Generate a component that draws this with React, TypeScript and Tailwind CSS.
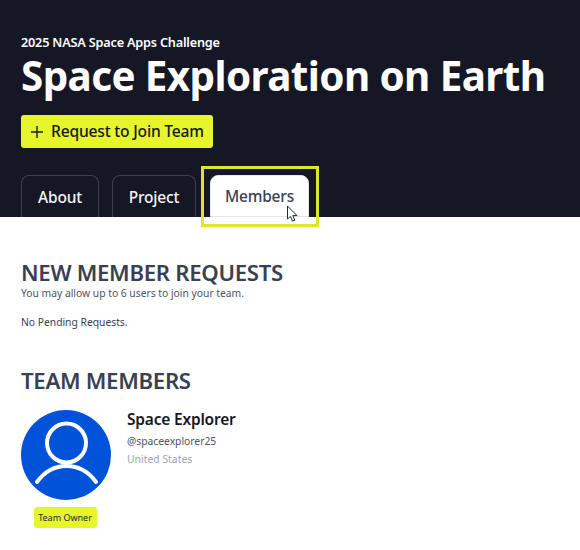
import React from 'react';

const font = "font-['Noto_Sans',sans-serif]";

const TabLink: React.FC<{ label: string; active?: boolean; width: string }> = ({ label, active, width }) => {
  const look = active
    ? 'bg-white text-[#374151] border-[#e5e7eb] border-b'
    : 'bg-[#161724] text-[#f3f4f6] border-[#374151] border-b-0';
  return (
    <div className={`${look} ${width} h-[42px] pt-[2px] rounded-t-lg border flex items-center justify-center text-[15.5px] font-medium tracking-[-0.2px]`}>
      {label}
    </div>
  );
};

const App: React.FC = () => {
  return (
    <div className={`${font} relative w-[580px] h-[550px] bg-white overflow-hidden`}>
      <div className="bg-[#161724] h-[217px] px-[21px] pt-[34px] flex flex-col">
        <div className="text-white text-[12.7px] leading-[17px] font-semibold tracking-[-0.2px]">2025 NASA Space Apps Challenge</div>
        <h1 className="text-white text-[40.4px] leading-[50px] font-bold tracking-[-0.6px] whitespace-nowrap">Space Exploration on Earth</h1>
        <div className="mt-[14px] w-[192px] h-[33px] bg-[#e6f52c] rounded-[3px] flex items-center justify-center gap-[7px] text-[#161724] text-[15.6px] font-medium tracking-[-0.2px]">
          <svg width="14" height="14" viewBox="0 0 14 14" fill="none" stroke="#161724" strokeWidth="1.4">
            <path d="M7 1v12M1 7h12" />
          </svg>
          Request to Join Team
        </div>
        <div className="mt-auto flex gap-[13px]">
          <TabLink label="About" width="w-[78px]" />
          <TabLink label="Project" width="w-[84px]" />
          <TabLink label="Members" width="w-[99px] ml-[1px]" active />
        </div>
      </div>

      <div className="px-[21px] pt-[41px]">
        <h2 className="text-[#374151] text-[22.2px] leading-[30px] font-semibold tracking-[-0.3px]">NEW MEMBER REQUESTS</h2>
        <p className="-mt-[2px] text-[#4b5563] text-[10.3px] leading-[14px]">You may allow up to 6 users to join your team.</p>
        <p className="mt-[15px] text-[#374151] text-[10.3px] leading-[14px]">No Pending Requests.</p>

        <h2 className="mt-[37px] text-[#374151] text-[22.2px] leading-[30px] font-semibold tracking-[-0.3px]">TEAM MEMBERS</h2>

        <div className="mt-[14px] flex gap-[16px]">
          <div className="flex flex-col items-center w-[90px]">
            <svg width="90" height="90" viewBox="0 0 90 90">
              <circle cx="45" cy="45" r="45" fill="#0052d9" />
              <circle cx="45.5" cy="33" r="19.5" fill="none" stroke="white" strokeWidth="4" />
              <path d="M16 72C24 61 35 56 45.5 56S67 61 75 72" fill="none" stroke="white" strokeWidth="4" strokeLinecap="round" />
            </svg>
            <div className="mt-[7px] -ml-[2px] h-[21px] w-[63px] bg-[#e6f52c] rounded-[3px] flex items-center justify-center text-[#1f2937] text-[9px] whitespace-nowrap">
              Team Owner
            </div>
          </div>
          <div className="-mt-[1px]">
            <div className="text-[#161724] text-[15.5px] leading-[20px] font-semibold tracking-[-0.2px]">Space Explorer</div>
            <div className="mt-[4px] text-[#4b5563] text-[10.3px] leading-[16px]">@spaceexplorer25</div>
            <div className="mt-[2px] text-[#9ca3af] text-[10.4px] leading-[16px]">United States</div>
          </div>
        </div>
      </div>

      {/* highlight drawn over the tab */}
      <div className="absolute left-[201px] top-[166px] w-[118px] h-[61px] border-[3px] border-[#dde62b]" />
      <svg className="absolute left-[286px] top-[205px]" width="13" height="18" viewBox="0 0 13 18">
        <path d="M1.5 1v13l3-2.6 2 4.8 2.3-1-2-4.6h4.2z" fill="white" stroke="#1f2937" strokeWidth="1" />
      </svg>
    </div>
  );
};

export default App;
